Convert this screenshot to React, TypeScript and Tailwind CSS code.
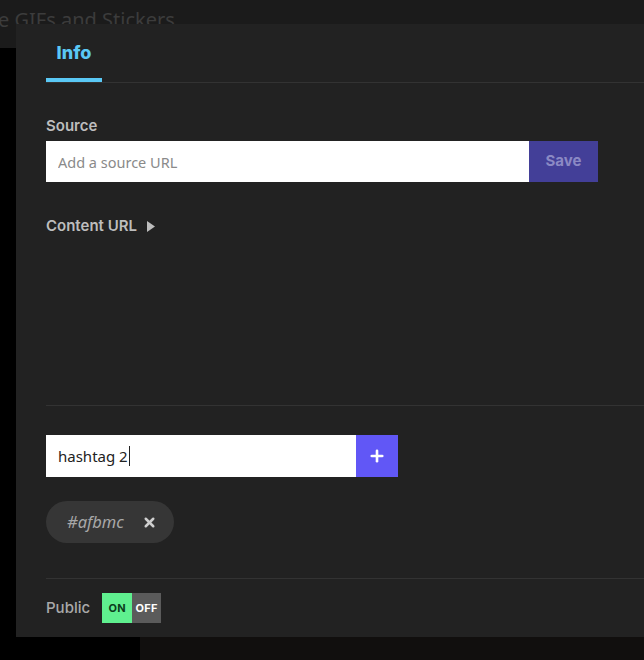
import { Plus, X } from "lucide-react";

function Toggle() {
  return (
    <div className="flex h-[30px] w-[59px] text-[11px] font-bold tracking-wide">
      <span className="flex w-[30px] items-center justify-center bg-[#5ff08f] text-[#0b3d1c]">ON</span>
      <span className="flex w-[29px] items-center justify-center bg-[#5b5b5b] text-white">OFF</span>
    </div>
  );
}

export default function App() {
  return (
    <div className="relative h-[660px] w-[644px] overflow-hidden bg-black font-['Inter',sans-serif]">
      {/* page behind the modal */}
      <div className="h-[48px] bg-[#1b1b1b] pt-[8px]">
        <h1 className="-ml-[2px] text-[20px] leading-[24px] text-[#3c3c3c] font-['Noto_Sans',sans-serif]">
          e GIFs and Stickers
        </h1>
      </div>
      <div className="flex h-[612px]">
        <div className="w-[140px]" />
        <div className="flex-1 bg-[#110f0e]" />
      </div>

      {/* modal */}
      <div className="absolute left-[16px] top-[24px] w-[660px] bg-[#222222] pl-[30px]">
        <div className="flex h-[59px] border-b border-[#333333]">
          <div className="flex w-[56px] flex-col items-center justify-end">
            <span className="mb-[15px] text-[18px] font-extrabold leading-[20px] text-[#5ac8f5]">Info</span>
            <span className="h-[4px] w-full bg-[#5ac8f5]" />
          </div>
        </div>

        <div className="pt-[33px] pr-[46px]">
          <label className="block text-[15px] font-semibold leading-[20px] text-[#bdbdbd]">Source</label>
          <div className="mt-[5px] flex h-[41px] w-[552px]">
            <input
              className="h-full flex-1 bg-white px-[12px] text-[14.5px] text-[#222] placeholder:text-[#8a8a8a] outline-none font-['Noto_Sans',sans-serif]"
              placeholder="Add a source URL"
            />
            <button className="w-[69px] bg-[#433f98] text-[15px] font-bold text-[#8b89c4]">Save</button>
          </div>

          <div className="mt-[34px] flex items-center gap-[10px] text-[15px] font-semibold leading-[20px] text-[#bdbdbd]">
            <span>Content URL</span>
            <svg width="8" height="11" viewBox="0 0 8 11">
              <path d="M0 0 L8 5.5 L0 11 Z" fill="#bdbdbd" />
            </svg>
          </div>
        </div>

        <div className="h-[170px] border-b border-[#333333]" />

        <div className="pt-[29px]">
          <div className="flex h-[42px] w-[352px]">
            <div className="flex flex-1 items-center bg-white px-[12px] text-[15px] text-[#222] font-['Noto_Sans',sans-serif]">
              hashtag 2<span className="ml-[1px] h-[20px] w-[1px] bg-[#222]" />
            </div>
            <button className="flex w-[42px] items-center justify-center bg-[#6157f6] text-white">
              <Plus size={18} strokeWidth={3.5} />
            </button>
          </div>

          <div className="mt-[24px] inline-flex h-[42px] items-center gap-[18px] rounded-full bg-[#363636] pl-[21px] pr-[17px]">
            <span className="text-[16.5px] italic text-[#a8a8a8] font-['Noto_Sans',sans-serif]">#afbmc</span>
            <X size={15} strokeWidth={4} className="text-[#cfcfcf]" />
          </div>
        </div>

        <div className="mt-[35px] border-b border-[#333333]" />

        <div className="flex items-center gap-[12px] py-[14px]">
          <span className="text-[15px] font-medium text-[#a9a9a9]">Public</span>
          <Toggle />
        </div>
      </div>
    </div>
  );
}
